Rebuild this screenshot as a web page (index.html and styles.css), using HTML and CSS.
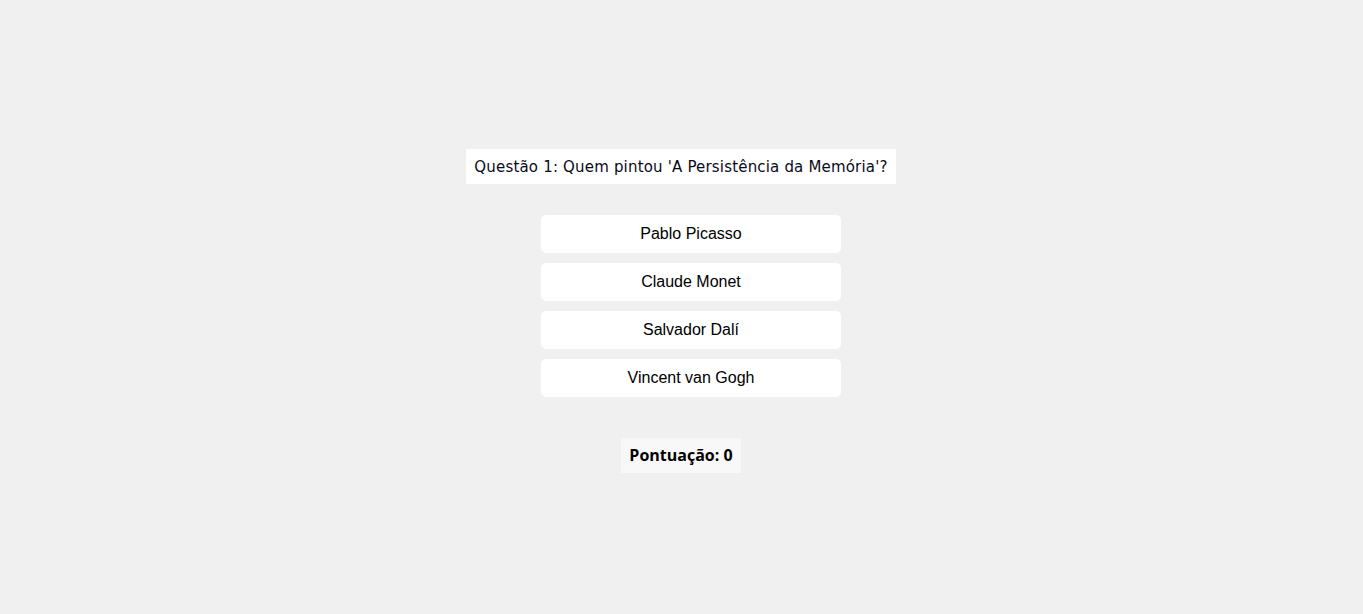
FILE: index.html
```html
<!DOCTYPE html>
<html lang="pt">
<head>
<meta charset="utf-8">
<title>Quiz</title>
<link rel="stylesheet" href="styles.css">
</head>
<body>
<main class="quiz">
  <h2 class="question">Questão 1: Quem pintou 'A Persistência da Memória'?</h2>
  <div class="options">
    <button class="option">Pablo Picasso</button>
    <button class="option">Claude Monet</button>
    <button class="option">Salvador Dalí</button>
    <button class="option">Vincent van Gogh</button>
  </div>
  <div class="score">Pontuação: 0</div>
</main>
</body>
</html>
```
FILE: styles.css
```css
html, body {
  margin: 0;
  padding: 0;
  background: #f0f0f0;
}
body {
  box-sizing: border-box;
  padding-right: 1px;
  height: 614px;
  display: flex;
  flex-direction: column;
  align-items: center;
  font-family: "DejaVu Sans", Verdana, sans-serif;
}
.quiz {
  margin-top: 149px;
  display: flex;
  flex-direction: column;
  align-items: center;
}
.question {
  margin: 0;
  background: #ffffff;
  padding: 0 8px;
  height: 35px;
  line-height: 36px;
  font-size: 15px;
  letter-spacing: 0.18px;
  font-weight: normal;
  color: #0a0a1a;
}
.options {
  margin-top: 31px;
  margin-left: 20px;
  display: flex;
  flex-direction: column;
  gap: 10px;
}
.option {
  width: 300px;
  height: 38px;
  border: none;
  border-radius: 5px;
  background: #ffffff;
  font-family: "Liberation Sans", Arial, sans-serif;
  font-size: 16px;
  color: #000;
  padding: 0;
}
.score {
  margin-top: 41px;
  background: #f8f8f8;
  width: 120px;
  height: 35px;
  line-height: 35px;
  text-align: center;
  font-family: "Open Sans", "DejaVu Sans", sans-serif;
  font-weight: bold;
  font-size: 16px;
  color: #000;
}
```
